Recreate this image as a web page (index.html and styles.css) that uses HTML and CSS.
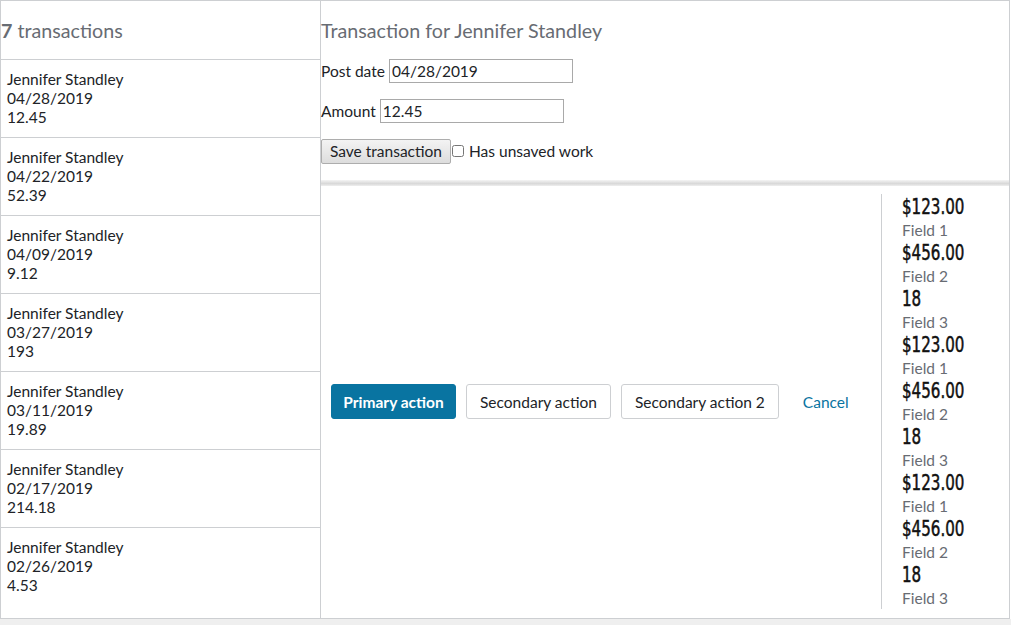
FILE: index.html
```html
<!DOCTYPE html>
<html>
<head>
<meta charset="utf-8">
<link rel="stylesheet" href="styles.css">
</head>
<body>
<div class="app">
  <div class="list">
    <div class="list-header"><b>7</b> transactions</div>
    <div class="item">Jennifer Standley<br>04/28/2019<br>12.45</div>
    <div class="item">Jennifer Standley<br>04/22/2019<br>52.39</div>
    <div class="item">Jennifer Standley<br>04/09/2019<br>9.12</div>
    <div class="item">Jennifer Standley<br>03/27/2019<br>193</div>
    <div class="item">Jennifer Standley<br>03/11/2019<br>19.89</div>
    <div class="item">Jennifer Standley<br>02/17/2019<br>214.18</div>
    <div class="item last">Jennifer Standley<br>02/26/2019<br>4.53</div>
  </div>
  <div class="detail">
    <div class="form-area">
      <div class="title">Transaction for Jennifer Standley</div>
      <div class="row">Post date <input class="inp inp-date" type="text" value="04/28/2019"></div>
      <div class="row">Amount <input class="inp inp-amt" type="text" value="12.45"></div>
      <div class="row"><button class="save">Save transaction</button><input class="chk" type="checkbox"> Has unsaved work</div>
    </div>
    <div class="divider"></div>
    <div class="bottom">
      <div class="actions">
        <button class="btn btn-primary">Primary action</button>
        <button class="btn btn-secondary">Secondary action</button>
        <button class="btn btn-secondary">Secondary action 2</button>
        <a class="link" href="#">Cancel</a>
      </div>
      <div class="summary">
        <div class="val"><span>$123.00</span></div><div class="lbl">Field 1</div>
        <div class="val"><span>$456.00</span></div><div class="lbl">Field 2</div>
        <div class="val"><span>18</span></div><div class="lbl">Field 3</div>
        <div class="val"><span>$123.00</span></div><div class="lbl">Field 1</div>
        <div class="val"><span>$456.00</span></div><div class="lbl">Field 2</div>
        <div class="val"><span>18</span></div><div class="lbl">Field 3</div>
        <div class="val"><span>$123.00</span></div><div class="lbl">Field 1</div>
        <div class="val"><span>$456.00</span></div><div class="lbl">Field 2</div>
        <div class="val"><span>18</span></div><div class="lbl">Field 3</div>
      </div>
    </div>
  </div>
</div>
<div class="scrollbar"></div>
</body>
</html>
```
FILE: styles.css
```css
html, body {
  margin: 0;
  padding: 0;
  background: #fff;
}
body {
  font-family: Lato, "Open Sans", sans-serif;
  font-size: 15.5px;
  color: #212327;
  width: 1011px;
  height: 625px;
  overflow: hidden;
}
.app {
  display: flex;
  width: 1008px;
  height: 617px;
  border: 1px solid #cdcfd2;
}
.list {
  width: 319px;
  border-right: 1px solid #cdcfd2;
  display: flex;
  flex-direction: column;
}
.list-header {
  height: 58px;
  border-bottom: 1px solid #cdcfd2;
  display: flex;
  align-items: center;
  font-size: 19.7px;
  color: #686c73;
}
.list-header b {
  margin-right: 5px;
}
.item {
  height: 67px;
  padding: 10px 6px 0;
  line-height: 18.75px;
  border-bottom: 1px solid #cdcfd2;
}
.item.last {
  border-bottom: none;
  flex: 1;
}
.detail {
  flex: 1;
  display: flex;
  flex-direction: column;
}
.form-area {
  height: 180px;
}
.title {
  font-size: 19.7px;
  color: #686c73;
  height: 58px;
  display: flex;
  align-items: center;
}
.row {
  height: 40px;
  display: flex;
  align-items: center;
  margin-top: -8px;
  margin-bottom: 8px;
}
.inp {
  font-family: Lato, "Open Sans", sans-serif;
  font-size: 15.5px;
  color: #212327;
  border: 1px solid #a9a9a9;
  height: 24px;
  box-sizing: border-box;
  padding: 0 2px;
  margin-left: 4px;
}
.inp-date { width: 184px; }
.inp-amt { width: 184px; }
.save {
  font-family: Lato, "Open Sans", sans-serif;
  font-size: 15.5px;
  color: #212327;
  height: 25px;
  width: 130px;
  padding: 0;
  border: 1px solid #adadad;
  border-radius: 2px;
  background: linear-gradient(#f3f3f3, #dddddd);
}
.chk {
  margin: 0 5px 0 1px;
  width: 12px;
  height: 12px;
}
.divider {
  height: 6px;
  background: linear-gradient(#f4f4f4, #d8d8d8 60%, #efefef);
}
.bottom {
  flex: 1;
  display: flex;
  padding: 8px 0 9px;
}
.actions {
  flex: 1;
  display: flex;
  align-items: center;
  padding-left: 10px;
  gap: 10px;
}
.btn {
  font-family: Lato, "Open Sans", sans-serif;
  font-size: 15.5px;
  height: 35px;
  border-radius: 3px;
  padding: 0 13px;
  cursor: pointer;
}
.btn-primary {
  background: #0974a1;
  color: #fff;
  border: 1px solid #0974a1;
  font-weight: bold;
  width: 125px;
  padding: 0;
}
.btn-secondary {
  background: #fff;
  color: #212327;
  border: 1px solid #cdcfd2;
}
.link {
  color: #0974a1;
  text-decoration: none;
  margin-left: 14px;
}
.summary {
  width: 107px;
  border-left: 1px solid #cdcfd2;
  padding-left: 20px;
  display: flex;
  flex-direction: column;
  padding-top: 1px;
}
.val {
  font-family: "DejaVu Sans Condensed", "Liberation Sans", sans-serif;
  font-size: 21.5px;
  line-height: 24px;
  color: #111;
}
.val span {
  display: inline-block;
  transform: scaleX(0.78);
  transform-origin: left center;
  -webkit-text-stroke: 0.5px #111;
}
.lbl {
  font-size: 15.5px;
  line-height: 22px;
  color: #686c73;
}
.scrollbar {
  height: 6px;
  background: #efefef;
}
```
